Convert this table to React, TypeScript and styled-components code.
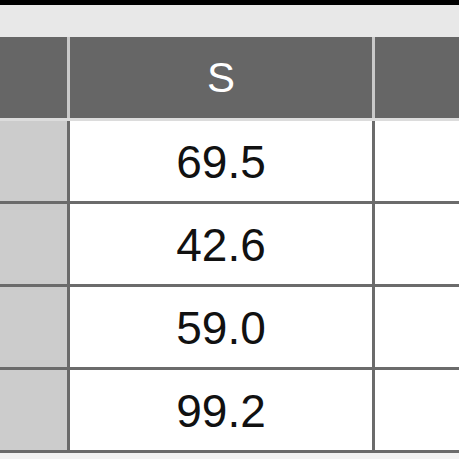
import React from "react";
import styled, { createGlobalStyle } from "styled-components";

const Global = createGlobalStyle`
  html, body { margin: 0; padding: 0; background: #f2f2f2; }
  body { font-family: "Liberation Sans", Arial, sans-serif; }
`;

const Page = styled.div`
  width: 459px;
  height: 459px;
  overflow: hidden;
  display: flex;
  flex-direction: column;
  background: #f2f2f2;
`;

const TopBar = styled.div`
  height: 5px;
  background: #000;
  flex: none;
`;

const Band = styled.div`
  height: 32px;
  background: #e8e8e8;
  flex: none;
`;

const HeaderRow = styled.div`
  display: grid;
  grid-template-columns: 67px 302px 1fr;
  column-gap: 3px;
  background: #c9c9c9;
  height: 81px;
  border-bottom: 3px solid #dcdcdc;
  flex: none;
`;

const HeadCell = styled.div`
  background: #666666;
  color: #ffffff;
  display: flex;
  align-items: center;
  justify-content: center;
  font-size: 42px;
  font-weight: 400;
`;

const Body = styled.div`
  display: grid;
  grid-template-columns: 67px 302px 1fr;
  grid-auto-rows: 80px;
  gap: 3px;
  background: #6b6b6b;
  border-bottom: 3px solid #6b6b6b;
  flex: none;
`;

const Cell = styled.div<{ $shade?: boolean }>`
  background: ${(p) => (p.$shade ? "#cccccc" : "#ffffff")};
  color: #111;
  display: flex;
  align-items: center;
  justify-content: center;
  font-size: 46px;
  padding-top: 2px;
`;

const values = ["69.5", "42.6", "59.0", "99.2"];

export default function App() {
  return (
    <Page>
      <Global />
      <TopBar />
      <Band />
      <HeaderRow>
        <HeadCell />
        <HeadCell>S</HeadCell>
        <HeadCell />
      </HeaderRow>
      <Body>
        {values.map((v) => (
          <React.Fragment key={v}>
            <Cell $shade />
            <Cell>{v}</Cell>
            <Cell />
          </React.Fragment>
        ))}
      </Body>
    </Page>
  );
}
